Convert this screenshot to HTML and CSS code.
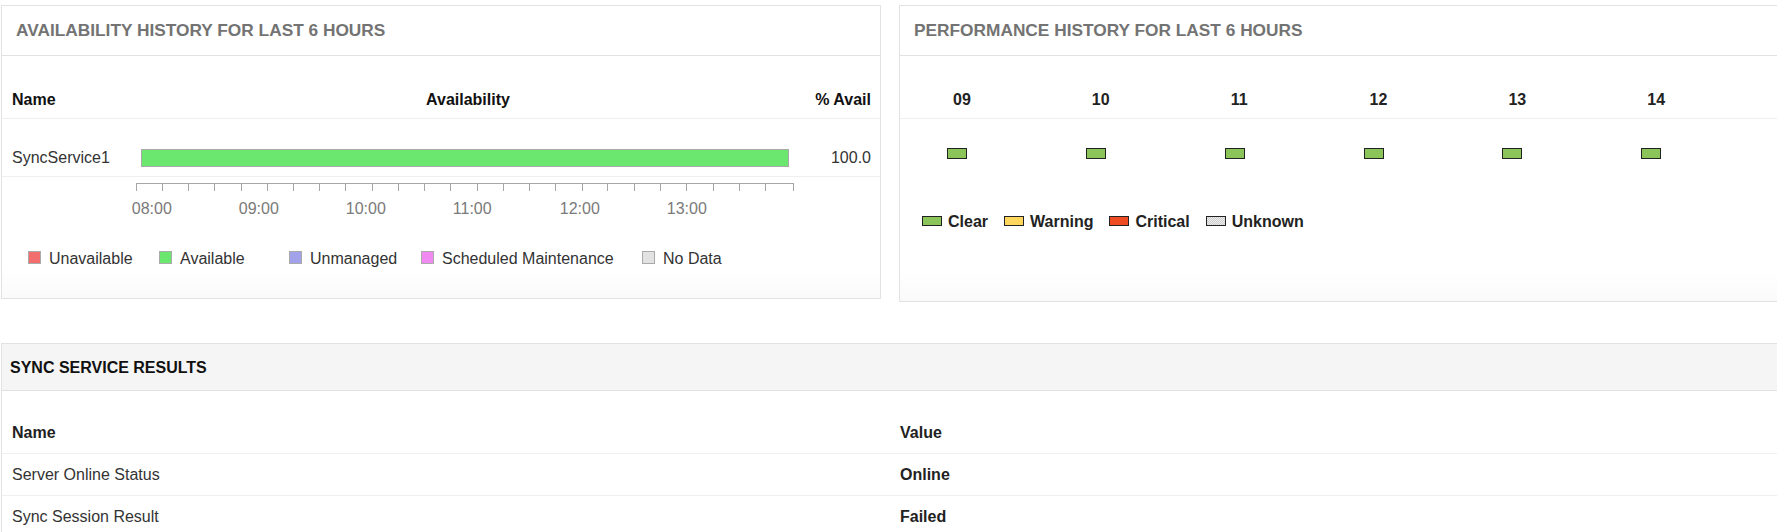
FILE: index.html
```html
<!DOCTYPE html>
<html lang="en">
<head>
<meta charset="utf-8">
<title>Sync Service Monitor</title>
<link rel="stylesheet" href="styles.css">
</head>
<body>
<div class="top-row">
  <section class="panel panel-avail">
    <div class="panel-head"><h2>AVAILABILITY HISTORY FOR LAST 6 HOURS</h2></div>
    <div class="avail-grid avail-head">
      <div class="c-name">Name</div>
      <div class="c-bar c-bar-head">Availability</div>
      <div class="c-pct">% Avail</div>
    </div>
    <div class="avail-grid avail-row">
      <div class="c-name">SyncService1</div>
      <div class="c-bar"><div class="bar"></div></div>
      <div class="c-pct">100.0</div>
    </div>
    <svg class="axis" width="878" height="50" viewBox="0 0 878 50" xmlns="http://www.w3.org/2000/svg">
      <g stroke="#a6a6a6" stroke-width="1" fill="none">
        <line x1="134" y1="6.5" x2="792" y2="6.5"/>
        <line x1="134.5" y1="6" x2="134.5" y2="14"/>
        <line x1="160.5" y1="6" x2="160.5" y2="14"/>
        <line x1="186.5" y1="6" x2="186.5" y2="14"/>
        <line x1="212.5" y1="6" x2="212.5" y2="14"/>
        <line x1="239.5" y1="6" x2="239.5" y2="14"/>
        <line x1="265.5" y1="6" x2="265.5" y2="14"/>
        <line x1="291.5" y1="6" x2="291.5" y2="14"/>
        <line x1="317.5" y1="6" x2="317.5" y2="14"/>
        <line x1="343.5" y1="6" x2="343.5" y2="14"/>
        <line x1="370.5" y1="6" x2="370.5" y2="14"/>
        <line x1="396.5" y1="6" x2="396.5" y2="14"/>
        <line x1="422.5" y1="6" x2="422.5" y2="14"/>
        <line x1="448.5" y1="6" x2="448.5" y2="14"/>
        <line x1="475.5" y1="6" x2="475.5" y2="14"/>
        <line x1="501.5" y1="6" x2="501.5" y2="14"/>
        <line x1="527.5" y1="6" x2="527.5" y2="14"/>
        <line x1="553.5" y1="6" x2="553.5" y2="14"/>
        <line x1="580.5" y1="6" x2="580.5" y2="14"/>
        <line x1="605.5" y1="6" x2="605.5" y2="14"/>
        <line x1="632.5" y1="6" x2="632.5" y2="14"/>
        <line x1="658.5" y1="6" x2="658.5" y2="14"/>
        <line x1="684.5" y1="6" x2="684.5" y2="14"/>
        <line x1="711.5" y1="6" x2="711.5" y2="14"/>
        <line x1="737.5" y1="6" x2="737.5" y2="14"/>
        <line x1="763.5" y1="6" x2="763.5" y2="14"/>
        <line x1="791.5" y1="6" x2="791.5" y2="14"/>
      </g>
      <g class="axis-labels">
        <text x="129.8" y="37">08:00</text>
        <text x="236.8" y="37">09:00</text>
        <text x="343.8" y="37">10:00</text>
        <text x="450.8" y="37">11:00</text>
        <text x="557.8" y="37">12:00</text>
        <text x="664.8" y="37">13:00</text>
      </g>
    </svg>
    <div class="avail-legend">
      <div class="lg-item"><span class="sw sw-unavail"></span><span>Unavailable</span></div>
      <div class="lg-item"><span class="sw sw-avail"></span><span>Available</span></div>
      <div class="lg-item"><span class="sw sw-unmanaged"></span><span>Unmanaged</span></div>
      <div class="lg-item"><span class="sw sw-maint"></span><span>Scheduled Maintenance</span></div>
      <div class="lg-item"><span class="sw sw-nodata"></span><span>No Data</span></div>
    </div>
  </section>

  <section class="panel panel-perf">
    <div class="panel-head"><h2>PERFORMANCE HISTORY FOR LAST 6 HOURS</h2></div>
    <div class="perf-grid perf-head">
      <div>09</div><div>10</div><div>11</div><div>12</div><div>13</div><div>14</div>
    </div>
    <div class="perf-grid perf-blocks">
      <div><span class="blk st-clear"></span></div>
      <div><span class="blk st-clear"></span></div>
      <div><span class="blk st-clear"></span></div>
      <div><span class="blk st-clear"></span></div>
      <div><span class="blk st-clear"></span></div>
      <div><span class="blk st-clear"></span></div>
    </div>
    <div class="perf-legend">
      <div class="pl-item"><span class="psw st-clear"></span>Clear</div>
      <div class="pl-item"><span class="psw st-warning"></span>Warning</div>
      <div class="pl-item"><span class="psw st-critical"></span>Critical</div>
      <div class="pl-item"><span class="psw st-unknown"></span>Unknown</div>
    </div>
  </section>
</div>

<section class="results">
  <div class="results-head"><h3>SYNC SERVICE RESULTS</h3></div>
  <div class="res-grid res-headrow">
    <div>Name</div><div>Value</div>
  </div>
  <div class="res-grid res-row">
    <div>Server Online Status</div><div class="val">Online</div>
  </div>
  <div class="res-grid res-row">
    <div>Sync Session Result</div><div class="val">Failed</div>
  </div>
</section>
</body>
</html>
```
FILE: styles.css
```css
* { box-sizing: border-box; }

html, body {
  margin: 0;
  overflow: hidden;
  background: #fff;
}

body {
  padding: 5px 0 0 1px;
  font-family: "Liberation Sans", Arial, sans-serif;
  font-size: 16px;
  line-height: 19px;
  color: #333;
}

.top-row {
  display: flex;
  align-items: flex-start;
  gap: 18px;
  width: 1778px;
}

.panel {
  flex: 0 0 880px;
  width: 880px;
  border: 1px solid #e2e2e2;
  background: linear-gradient(to bottom, #fff 0%, #fff 90%, #fafafa 100%);
}

.panel-head {
  height: 50px;
  padding: 14px 14px 15px;
  border-bottom: 1px solid #e2e2e2;
}

.panel-head h2 {
  margin: 0;
  font-size: 17.3px;
  line-height: 20px;
  font-weight: bold;
  color: #737373;
  white-space: nowrap;
}

/* Availability table */
.avail-grid {
  display: grid;
  grid-template-columns: 129px 1fr 80px;
  border-bottom: 1px solid #efefef;
}

.avail-head > div {
  padding: 34px 10px 9px;
  font-weight: bold;
  color: #111;
}

.avail-row > div {
  padding: 29px 10px 9px;
}

.c-pct { text-align: right; padding-right: 9px !important; }

.c-bar { padding-left: 10px !important; padding-right: 11px !important; }
.c-bar-head { text-align: center; padding-left: 16px !important; }

.bar {
  height: 18px;
  margin-top: 1px;
  background: #6be66e;
  border: 1px solid #a9a9a9;
}

.axis { display: block; }

.axis-labels text {
  font-family: "Liberation Sans", Arial, sans-serif;
  font-size: 16px;
  fill: #7a7a7a;
}

.avail-legend {
  display: grid;
  grid-template-columns: 131px 130px 132px 221px auto;
  padding: 0 0 30px 26px;
  margin-top: 22px;
  color: #333;
}

.lg-item {
  display: flex;
  align-items: flex-start;
  gap: 8px;
  white-space: nowrap;
}

.sw {
  flex: 0 0 13px;
  width: 13px;
  height: 13px;
  margin-top: 2px;
  border: 1px solid #aaa;
}
.sw-unavail { background: #f26d6d; }
.sw-avail { background: #6be66e; }
.sw-unmanaged { background: #a2a2ea; }
.sw-maint { background: #f08af0; }
.sw-nodata { background: #e2e2e2; }

/* Performance */
.perf-grid {
  display: grid;
  grid-template-columns: repeat(6, 138.86px);
}

.perf-head {
  border-bottom: 1px solid #efefef;
}

.perf-head > div {
  padding: 34px 0 9px 53px;
  font-weight: bold;
  color: #222;
}

.perf-blocks {
  padding-top: 29px;
}

.perf-blocks > div {
  padding-left: 47px;
  height: 11px;
}

.blk {
  display: block;
  width: 20px;
  height: 11px;
  border: 1px solid #222;
}

.st-clear { background: #8bc55a; }
.st-warning { background: #ffd75e; }
.st-critical { background: #ee4b22; }
.st-unknown {
  background: repeating-conic-gradient(#cfcfcf 0 25%, #ececec 0 50%) 0 0 / 2px 2px;
}

.perf-legend {
  display: flex;
  margin-top: 53px;
  padding: 0 0 70px 22px;
  font-weight: bold;
  color: #222;
}

.pl-item {
  display: flex;
  align-items: flex-start;
  margin-right: 16px;
  white-space: nowrap;
}

.psw {
  flex: 0 0 20px;
  width: 20px;
  height: 10px;
  margin: 4px 6px 0 0;
  border: 1px solid #222;
}

/* Results */
.results {
  width: 1778px;
  margin-top: 41px;
  border: 1px solid #e2e2e2;
}

.results-head {
  height: 47px;
  padding: 14px 8px 13px;
  background: #f5f5f5;
  border-bottom: 1px solid #e2e2e2;
}

.results-head h3 {
  margin: 0;
  font-size: 16px;
  line-height: 19px;
  font-weight: bold;
  color: #111;
}

.res-grid {
  display: grid;
  grid-template-columns: 1fr 1fr;
  border-bottom: 1px solid #efefef;
}

.res-headrow > div {
  padding: 32px 10px 11px;
  font-weight: bold;
  color: #222;
}

.res-row > div {
  padding: 11px 10px;
}

.res-row .val {
  font-weight: bold;
  color: #222;
}
```
